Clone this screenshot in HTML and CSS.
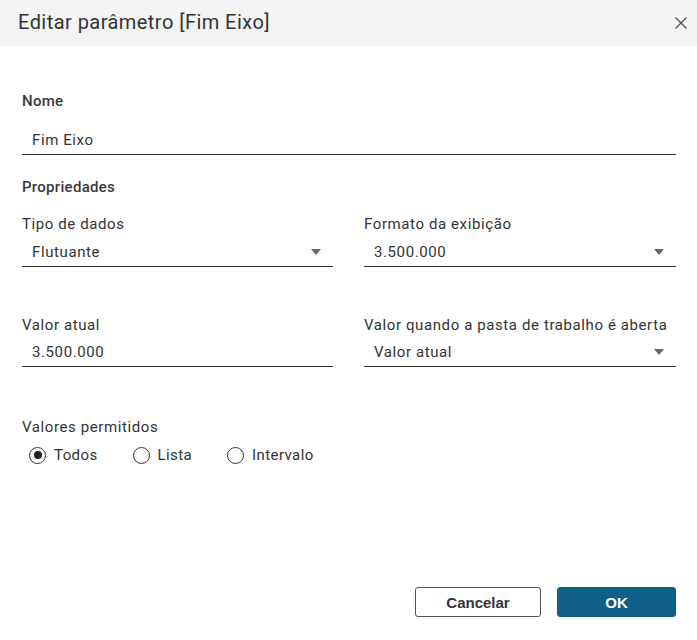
FILE: index.html
```html
<!DOCTYPE html>
<html lang="pt">
<head>
<meta charset="utf-8">
<title>Editar parâmetro</title>
<link rel="stylesheet" href="styles.css">
</head>
<body>
<div class="dialog">
  <header class="dlg-header">
    <h1 class="dlg-title">Editar parâmetro [Fim Eixo]</h1>
    <button class="dlg-close" aria-label="Fechar">
      <svg width="12" height="12" viewBox="0 0 12 12"><path d="M0.5 0.5 L11.5 11.5 M11.5 0.5 L0.5 11.5" stroke="#555" stroke-width="1.4" fill="none"/></svg>
    </button>
  </header>
  <main class="dlg-body">
    <div class="label strong">Nome</div>
    <div class="field name-field"><span class="field-text">Fim Eixo</span></div>

    <div class="label strong section">Propriedades</div>

    <div class="grid row1">
      <div class="col">
        <div class="label">Tipo de dados</div>
        <div class="field select"><span class="field-text">Flutuante</span><span class="caret"></span></div>
      </div>
      <div class="col">
        <div class="label">Formato da exibição</div>
        <div class="field select"><span class="field-text">3.500.000</span><span class="caret"></span></div>
      </div>
    </div>

    <div class="grid row2">
      <div class="col">
        <div class="label">Valor atual</div>
        <div class="field"><span class="field-text">3.500.000</span></div>
      </div>
      <div class="col">
        <div class="label">Valor quando a pasta de trabalho é aberta</div>
        <div class="field select"><span class="field-text">Valor atual</span><span class="caret"></span></div>
      </div>
    </div>

    <div class="label allowed">Valores permitidos</div>
    <div class="radios">
      <label class="radio"><span class="ring checked"></span>Todos</label>
      <label class="radio"><span class="ring"></span>Lista</label>
      <label class="radio"><span class="ring"></span>Intervalo</label>
    </div>
  </main>
  <footer class="dlg-footer">
    <button class="btn btn-secondary">Cancelar</button>
    <button class="btn btn-primary">OK</button>
  </footer>
</div>
</body>
</html>
```
FILE: styles.css
```css
* { box-sizing: border-box; }
html, body { margin: 0; padding: 0; background: #fff; }
body {
  font-family: Roboto, "Liberation Sans", Arial, sans-serif;
  color: #333;
}
.dialog {
  width: 697px;
  height: 640px;
  display: flex;
  flex-direction: column;
  background: #fff;
}
.dlg-header {
  height: 46px;
  background: #f4f4f4;
  display: flex;
  align-items: center;
  justify-content: space-between;
  padding: 0 10px 0 18px;
}
.dlg-title {
  margin: 0;
  font-size: 20px;
  font-weight: 400;
  letter-spacing: 0.45px;
  color: #333;
  line-height: 24px;
  padding-bottom: 2px;
}
.dlg-close {
  border: 0;
  background: transparent;
  padding: 0;
  width: 12px;
  height: 12px;
  display: flex;
}
.dlg-body {
  padding: 45px 21px 0 22px;
  flex: 1;
}
.label {
  font-size: 15px;
  line-height: 20px;
  letter-spacing: 0.6px;
  color: #333;
}
.label.strong { font-weight: 500; letter-spacing: 0.3px; color: #3a3a3a; }
.field {
  height: 29px;
  border-bottom: 1px solid #333;
  display: flex;
  align-items: center;
  padding: 0 10px;
  font-size: 15px;
  letter-spacing: 0.6px;
  color: #333;
}
.field-text { flex: 1; line-height: 20px; }
.name-field { margin-top: 15px; }
.section { margin-top: 22px; }
.grid {
  display: grid;
  grid-template-columns: 311px 312px;
  column-gap: 31px;
}
.row1 { margin-top: 17px; }
.row1 .field { margin-top: 4px; }
.row2 { margin-top: 48px; }
.row2 .field { margin-top: 3px; }
.caret {
  width: 0;
  height: 0;
  border-left: 5px solid transparent;
  border-right: 5px solid transparent;
  border-top: 6px solid #666;
  margin-right: 2px;
}
.allowed { margin-top: 50px; }
.radios {
  margin-top: 8px;
  display: flex;
  align-items: center;
  gap: 35px;
  padding-left: 7px;
  height: 20px;
}
.radio {
  display: flex;
  align-items: center;
  gap: 8px;
  font-size: 15px;
  letter-spacing: 0.4px;
  line-height: 20px;
}
.ring {
  width: 17px;
  height: 17px;
  border: 1px solid #333;
  border-radius: 50%;
  display: flex;
  align-items: center;
  justify-content: center;
}
.ring.checked::after {
  content: "";
  width: 8px;
  height: 8px;
  border-radius: 50%;
  background: #222;
}
.dlg-footer {
  display: flex;
  justify-content: flex-end;
  gap: 16px;
  padding: 0 21px 23px 0;
}
.btn {
  height: 30px;
  border-radius: 3px;
  font-family: "Liberation Sans", Arial, sans-serif;
  font-weight: 700;
  font-size: 15px;
  cursor: pointer;
}
.btn-secondary {
  width: 126px;
  background: #fff;
  border: 1px solid #555;
  color: #333;
}
.btn-primary {
  width: 119px;
  background: #0f5f86;
  border: 1px solid #0f5f86;
  color: #fff;
}
```
